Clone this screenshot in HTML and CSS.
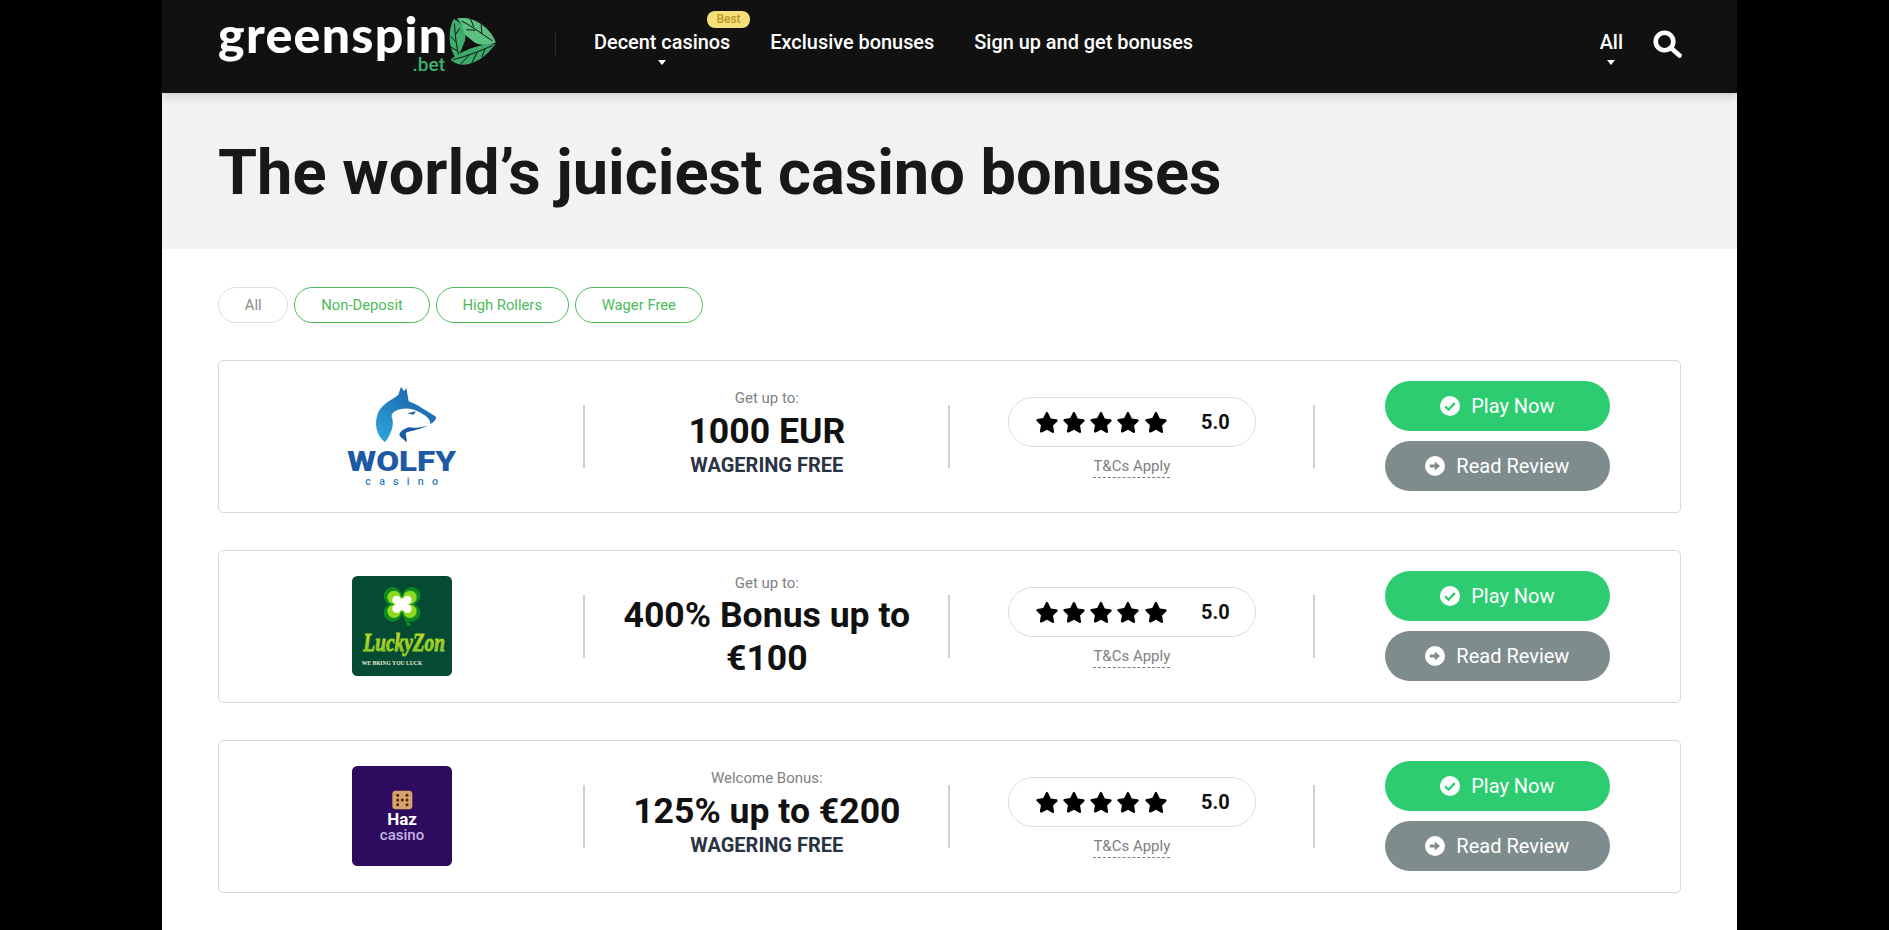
FILE: index.html
```html
<!DOCTYPE html>
<html lang="en">
<head>
<meta charset="utf-8">
<title>Greenspin.bet - The world's juiciest casino bonuses</title>
<link rel="stylesheet" href="styles.css">
</head>
<body>
<svg class="defs" width="0" height="0" aria-hidden="true">
  <symbol id="star" viewBox="0 0 24 24"><path d="M12 1.200c.6 0 1 .4 1.300 1l2.800 5.900 6.300.9c1.200.2 1.600 1.600.8 2.400l-4.600 4.500 1.100 6.400c.2 1.200-1 2-2 1.500L12 20.400l-5.700 3c-1 .5-2.200-.3-2-1.500l1.100-6.400L.8 11c-.8-.8-.4-2.200.8-2.400l6.300-.9 2.800-5.900c.3-.6.7-.9 1.300-.9z"/></symbol>
  <symbol id="check" viewBox="0 0 20 20"><circle cx="10" cy="10" r="10" fill="#fff"/><path d="M5.200 10.400l3.300 3.300 6.300-6.600" fill="none" stroke="#2ecc71" stroke-width="2.300"/></symbol>
  <symbol id="arrow" viewBox="0 0 20 20"><circle cx="10" cy="10" r="10" fill="#fff"/><path d="M4.800 8.500h5V5.400l5.200 4.600-5.200 4.600v-3.100h-5z" fill="#7f8c8d"/></symbol>
  <linearGradient id="wolfgrad" x1="0" y1="1" x2="1" y2="0"><stop offset="0" stop-color="#2ea9e0"/><stop offset=".55" stop-color="#2278bd"/><stop offset="1" stop-color="#1c5aa3"/></linearGradient>
  <linearGradient id="luckygrad" x1="0" y1="0" x2="0" y2="1"><stop offset="0" stop-color="#e6e23a"/><stop offset="1" stop-color="#5fb81f"/></linearGradient>
</svg>
<div class="page">
  <header class="topbar">
    <a class="logo" href="#">
      <span class="logo-words"><span class="logo-name">greenspin</span><span class="logo-tld">.bet</span></span>
      <svg class="logo-mark" viewBox="745 25 143 153">
        <path d="M762 28C742 62 746 122 772 150L796 92C800 62 788 40 762 28Z" fill="#3fae6c"/>
        <path d="M772 26C820 16 874 56 888 98C868 108 846 108 826 100L796 76C790 56 784 40 772 26Z" fill="#5cc082"/>
        <path d="M752 150C790 184 850 156 886 104C842 100 786 122 752 150Z" fill="#3cab6a"/>
        <path d="M798 84L830 102L794 124Z" fill="#111"/>
        <g fill="none" stroke="#111" stroke-width="3">
          <path d="M764 42C766 80 770 110 776 134M752 80L768 96M750 110L772 124M780 56L768 74"/>
          <path d="M786 34C816 50 846 72 878 94M812 28L822 52M844 44L846 72M800 60L826 62"/>
          <path d="M760 150C800 140 840 124 878 108M782 164L808 136M816 160L832 128M846 142L856 116"/>
        </g>
      </svg>
    </a>
    <span class="bar-rule"></span>
    <nav class="nav">
      <a class="nav-item" href="#">Decent casinos<span class="badge">Best</span><span class="caret"></span></a>
      <a class="nav-item" href="#">Exclusive bonuses</a>
      <a class="nav-item" href="#">Sign up and get bonuses</a>
    </nav>
    <div class="bar-right">
      <a class="nav-item" href="#">All<span class="caret"></span></a>
      <svg class="search" viewBox="0 0 29 28"><circle cx="11.500" cy="11.500" r="8.800" fill="none" stroke="#fff" stroke-width="4.600"/><path d="M18 18l8.500 7.500" stroke="#fff" stroke-width="4.600" stroke-linecap="round"/></svg>
    </div>
  </header>
  <section class="hero"><h1>The world’s juiciest casino bonuses</h1></section>
  <main class="content">
    <div class="filters">
      <a class="pill pill-off" href="#">All</a>
      <a class="pill" href="#">Non-Deposit</a>
      <a class="pill" href="#">High Rollers</a>
      <a class="pill" href="#">Wager Free</a>
    </div>

    <article class="card">
      <div class="cell cell-brand">
        <svg class="brand-wide" viewBox="45 30 342 312">
          <path fill="url(#wolfgrad)" d="M213 38L222 52L229 42L236 82C260 90 290 112 318 128C318 140 308 146 300 150C305 135 280 120 262 112C245 102 215 100 195 112C185 118 183 125 187 135C192 150 185 180 165 205C140 185 130 150 145 115C155 90 190 75 205 62Z"/>
          <path fill="#1c5aa3" d="M300 150C285 160 255 163 235 160C222 165 210 172 208 182C210 190 222 195 230 205C232 190 225 182 228 176C240 170 275 168 300 150Z"/>
          <path fill="#1c5aa3" d="M232 118L258 112L250 122Z"/>
          <text class="wolfy" x="52" y="291" textLength="326" lengthAdjust="spacingAndGlyphs">WOLFY</text>
          <text class="wolfy-sub" x="106" y="334" textLength="218">casino</text>
        </svg>
      </div>
      <div class="cell cell-bonus">
        <span class="lead">Get up to:</span>
        <strong class="amount">1000 EUR</strong>
        <span class="terms">WAGERING FREE</span>
      </div>
      <div class="cell cell-rate">
        <div class="rating">
          <span class="stars"><svg><use href="#star"/></svg><svg><use href="#star"/></svg><svg><use href="#star"/></svg><svg><use href="#star"/></svg><svg><use href="#star"/></svg></span>
          <b>5.0</b>
        </div>
        <a class="tcs" href="#">T&amp;Cs Apply</a>
      </div>
      <div class="cell cell-act">
        <a class="btn btn-play" href="#"><svg><use href="#check"/></svg>Play Now</a>
        <a class="btn btn-read" href="#"><svg><use href="#arrow"/></svg>Read Review</a>
      </div>
    </article>

    <article class="card">
      <div class="cell cell-brand">
        <svg class="brand" viewBox="0 0 300 300">
          <rect width="300" height="300" rx="16" fill="#054a33"/>
          <g fill="#0b8a22"><circle cx="122" cy="60" r="27"/><circle cx="178" cy="60" r="27"/><circle cx="122" cy="110" r="27"/><circle cx="178" cy="110" r="27"/><circle cx="150" cy="85" r="26"/><path d="M150 90L178 150L166 150L145 100Z"/></g>
          <g fill="#8edb1e"><circle cx="126" cy="64" r="20"/><circle cx="174" cy="64" r="20"/><circle cx="126" cy="106" r="20"/><circle cx="174" cy="106" r="20"/><circle cx="150" cy="85" r="22"/></g>
          <g fill="#fff"><circle cx="134" cy="72" r="13"/><circle cx="166" cy="72" r="13"/><circle cx="134" cy="98" r="13"/><circle cx="166" cy="98" r="13"/><circle cx="150" cy="85" r="17"/></g>
          <text class="lucky" transform="translate(34 226) scale(1 1.25)">LuckyZon</text>
          <text class="lucky-sub" x="29" y="267" textLength="182" lengthAdjust="spacingAndGlyphs">WE BRING YOU LUCK</text>
        </svg>
      </div>
      <div class="cell cell-bonus cell-bonus-wide">
        <span class="lead">Get up to:</span>
        <strong class="amount">400% Bonus up to €100</strong>
      </div>
      <div class="cell cell-rate">
        <div class="rating">
          <span class="stars"><svg><use href="#star"/></svg><svg><use href="#star"/></svg><svg><use href="#star"/></svg><svg><use href="#star"/></svg><svg><use href="#star"/></svg></span>
          <b>5.0</b>
        </div>
        <a class="tcs" href="#">T&amp;Cs Apply</a>
      </div>
      <div class="cell cell-act">
        <a class="btn btn-play" href="#"><svg><use href="#check"/></svg>Play Now</a>
        <a class="btn btn-read" href="#"><svg><use href="#arrow"/></svg>Read Review</a>
      </div>
    </article>

    <article class="card">
      <div class="cell cell-brand">
        <svg class="brand" viewBox="0 0 300 300">
          <rect width="300" height="300" rx="16" fill="#2d0b5e"/>
          <rect x="121" y="74" width="60" height="56" rx="10" fill="#d9a268"/>
          <g fill="#4a2510"><circle cx="137" cy="88" r="4.500"/><circle cx="165" cy="88" r="4.500"/><circle cx="137" cy="102" r="4.500"/><circle cx="151" cy="102" r="4.500"/><circle cx="165" cy="102" r="4.500"/><circle cx="137" cy="116" r="4.500"/><circle cx="165" cy="116" r="4.500"/></g>
          <text class="haz" x="150" y="178" text-anchor="middle">Haz</text>
          <text class="haz-sub" x="150" y="222" text-anchor="middle">casino</text>
        </svg>
      </div>
      <div class="cell cell-bonus">
        <span class="lead">Welcome Bonus:</span>
        <strong class="amount">125% up to €200</strong>
        <span class="terms">WAGERING FREE</span>
      </div>
      <div class="cell cell-rate">
        <div class="rating">
          <span class="stars"><svg><use href="#star"/></svg><svg><use href="#star"/></svg><svg><use href="#star"/></svg><svg><use href="#star"/></svg><svg><use href="#star"/></svg></span>
          <b>5.0</b>
        </div>
        <a class="tcs" href="#">T&amp;Cs Apply</a>
      </div>
      <div class="cell cell-act">
        <a class="btn btn-play" href="#"><svg><use href="#check"/></svg>Play Now</a>
        <a class="btn btn-read" href="#"><svg><use href="#arrow"/></svg>Read Review</a>
      </div>
    </article>
  </main>
</div>
</body>
</html>
```
FILE: styles.css
```css
* { box-sizing: border-box; }
html, body { margin: 0; height: 100%; overflow: hidden; }
body { background: #000; font-family: Roboto, "Liberation Sans", sans-serif; color: #17181a; }
a { color: inherit; text-decoration: none; }
.defs { position: absolute; }

.page { width: 1575px; height: 930px; margin-left: 162px; background: #fff; }

.topbar { position: relative; z-index: 1; display: flex; align-items: flex-start; height: 93px; padding: 0 55px 0 56px; background: #111; box-shadow: 0 2px 10px rgba(0,0,0,.2); color: #fff; }
.logo { display: flex; width: 278px; height: 93px; margin-right: 59px; }
.logo-words { display: flex; flex-direction: column; width: 227px; padding-top: 11px; margin-right: 3px; }
.logo-name { font-family: Lato, "Open Sans", sans-serif; font-weight: 900; font-size: 50px; line-height: 46px; letter-spacing: 1.300px; color: #fff; white-space: nowrap; }
.logo-tld { align-self: flex-end; font-family: Roboto, sans-serif; font-weight: 500; font-size: 19px; line-height: 16px; color: #3fae6c; }
.logo-mark { width: 48px; height: 51px; margin-top: 18px; }
.bar-rule { width: 1px; height: 25px; margin-top: 31px; background: #2a2a2a; }

.nav { display: flex; gap: 40px; margin-left: 38px; }
.nav-item { position: relative; display: block; padding-top: 30px; font-size: 19.900px; line-height: 25px; font-weight: 500; color: #fff; white-space: nowrap; }
.caret { position: absolute; left: 50%; top: 60px; margin-left: -4px; border: 4px solid transparent; border-top: 5px solid #fff; border-bottom: 0; }
.badge { position: absolute; left: 113px; top: 11px; width: 43px; height: 17px; border-radius: 8px; background: #f6df7b; color: #b8992c; font-size: 12px; line-height: 17px; font-weight: 500; text-align: center; }

.bar-right { display: flex; gap: 30px; margin-left: auto; }
.search { width: 29px; height: 28px; margin-top: 30px; }

.hero { display: flex; align-items: center; height: 156px; padding: 1px 0 0 56px; background: #f1f2f4; }
.hero h1 { margin: 0; font-size: 63.150px; line-height: 74px; font-weight: 700; color: #17181a; }

.content { padding: 38px 56px 0; }
.filters { display: flex; gap: 6px; margin-bottom: 37px; }
.pill { display: block; height: 36px; padding: 0 25.800px; border: 1px solid #4dbb5a; border-radius: 18px; font-size: 14.800px; line-height: 34px; color: #4dbb5a; }
.pill-off { border-color: #dcdcdc; color: #8a8a8a; }

.card { display: grid; grid-template-columns: repeat(4, 1fr); align-items: center; height: 153px; margin-bottom: 37px; border: 1px solid #d9d9d9; border-radius: 5px; }
.cell { display: flex; flex-direction: column; align-items: center; justify-content: center; height: 63px; margin-right: -.4px; border-right: 2px solid #cfcfcf; }
.cell:last-child { margin-right: 0; border-right: 0; }
.cell-brand { padding: 0 0 1px 2px; }
.brand { display: block; width: 100px; height: 100px; flex: none; }
.brand-wide { display: block; width: 114px; height: 104px; flex: none; }
.wolfy { font-family: Roboto, sans-serif; font-weight: 900; font-size: 84px; fill: #1c5aa3; }
.wolfy-sub { font-family: Roboto, sans-serif; font-weight: 500; font-size: 32px; fill: #2f80c0; }
.lucky { font-family: "Liberation Serif", serif; font-style: italic; font-weight: 700; font-size: 58px; fill: url(#luckygrad); stroke: #9fd022; stroke-width: 2px; }
.lucky-sub { font-family: "Liberation Serif", serif; font-weight: 700; font-size: 17px; fill: #e4ecd0; }
.haz { font-family: Roboto, sans-serif; font-weight: 700; font-size: 51px; fill: #fff; }
.haz-sub { font-family: Roboto, sans-serif; font-weight: 500; font-size: 45px; fill: #c7b4e6; }

.lead { flex: none; font-size: 15px; line-height: 20px; color: #808080; }
.amount { flex: none; width: 310px; text-align: center; font-size: 35.600px; line-height: 43px; font-weight: 700; color: #111; }
.cell-bonus { padding: 0 0 6px 1.500px; }
.cell-bonus .amount:not(:last-child) { margin-top: 2px; margin-bottom: -2px; }
.cell-bonus-wide { padding-bottom: 0; }
.cell-bonus-wide .lead { margin-bottom: 1px; }
.terms { flex: none; font-size: 20px; line-height: 28px; font-weight: 700; color: #2a3344; }

.rating { flex: none; display: flex; align-items: center; justify-content: space-between; width: 248px; height: 50px; padding: 0 25px 0 27px; border: 1px solid #dcdcdc; border-radius: 25px; background: #fff; }
.stars { display: flex; gap: 5.200px; }
.stars svg { width: 22px; height: 22px; fill: #000; }
.rating b { font-size: 20px; font-weight: 700; color: #111; }
.tcs { flex: none; margin-top: 9px; font-size: 15px; line-height: 21px; color: #808080; border-bottom: 1px dashed #808080; }
.cell-rate { padding: 1px 0 0 1px; }

.cell-act { padding-bottom: 2px; }
.btn { flex: none; display: flex; align-items: center; justify-content: center; gap: 11px; width: 225px; height: 50px; border-radius: 25px; font-size: 20px; color: #fff; }
.btn svg { width: 20px; height: 20px; }
.btn-play { background: #2ecc71; margin-bottom: 10px; }
.btn-read { background: #7f8c8d; }
```
